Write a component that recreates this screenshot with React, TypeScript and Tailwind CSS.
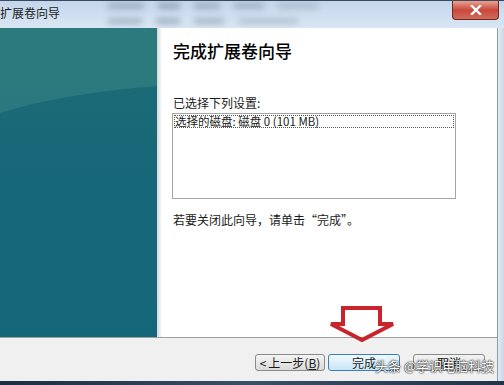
const FONT = "font-['Noto_Sans_CJK_SC','Liberation_Sans',sans-serif]";

function TitleBar() {
  return (
    <div className="relative flex h-[28px] items-start overflow-hidden border-t border-[#3a4a5c] bg-gradient-to-b from-[#c3d6ea] via-[#cfdff0] to-[#d9e6f3]">
      <span className="pt-[4px] text-[12px] leading-[16px] text-[#1b1b1b]">扩展卷向导</span>
      <div className="ml-[48px] flex flex-col gap-[9px] pt-[2px] opacity-50 blur-[3px]">
        <div className="flex gap-[14px]">
          <div className="h-[6px] w-[36px] bg-[#6d7f96]" />
          <div className="h-[6px] w-[22px] bg-[#5f7189]" />
          <div className="h-[6px] w-[26px] bg-[#6d7f96]" />
          <div className="h-[6px] w-[30px] bg-[#7a8aa0]" />
          <div className="h-[6px] w-[40px] bg-[#93a3b6]" />
        </div>
        <div className="flex gap-[14px]">
          <div className="h-[6px] w-[34px] bg-[#7a8aa0]" />
          <div className="h-[6px] w-[24px] bg-[#6d7f96]" />
          <div className="h-[6px] w-[30px] bg-[#7a8aa0]" />
          <div className="h-[6px] w-[60px] bg-[#93a3b6]" />
        </div>
      </div>
      <div className="ml-auto mr-[5px] flex h-[19px] w-[47px] items-center justify-center rounded-b-[4px] border border-t-0 border-[#6b2a24] bg-gradient-to-b from-[#e8a093] via-[#c9483b] to-[#d2695a]">
        <svg width="12" height="10" viewBox="0 0 12 10">
          <path d="M2 1 L10 9 M10 1 L2 9" stroke="#ffffff" strokeWidth="2.4" strokeLinecap="square" />
        </svg>
      </div>
    </div>
  );
}

function SidePanel() {
  return (
    <div className="relative w-[157px] bg-gradient-to-b from-[#1d6c74] via-[#17677a] to-[#146779]">
      <svg className="absolute inset-0" width="157" height="309" viewBox="0 0 157 309">
        <path d="M0 85 Q60 66 157 58 L157 0 L0 0 Z" fill="#2f7b80" opacity="0.85" />
      </svg>
    </div>
  );
}

function Content() {
  return (
    <div className="flex flex-1 flex-col bg-white pl-[11px] pt-[13px]">
      <h1 className="text-[17px] leading-[20px] font-medium text-black">完成扩展卷向导</h1>
      <p className="mt-[35px] text-[12px] leading-[14px] text-[#1a1a1a]">已选择下列设置:</p>
      <div className="ml-[-1px] mt-[3px] h-[86px] w-[284px] border border-[#a5a5a5] bg-white p-px">
        <div className="h-[13px] border border-dotted border-[#555] text-[11.5px] leading-[11px] text-[#1a1a1a]">
          选择的磁盘: 磁盘 0 (101 MB)
        </div>
      </div>
      <p className="mt-[14px] text-[12px] leading-[14px] text-[#1a1a1a]">若要关闭此向导，请单击“完成”。</p>
    </div>
  );
}

function Button({ children, primary, w }: { children: React.ReactNode; primary?: boolean; w: string }) {
  return (
    <div
      className={`flex h-[17px] items-center justify-center rounded-[3px] border text-[12px] leading-[14px] text-[#1a1a1a] ${w} ${
        primary
          ? "border-[#3c7fb1] bg-gradient-to-b from-[#f2f9fd] to-[#c7e6f7]"
          : "border-[#8a8a8a] bg-gradient-to-b from-[#f4f4f4] to-[#dadada]"
      }`}
    >
      {children}
    </div>
  );
}

function Footer() {
  return (
    <div className="flex h-[43px] items-start justify-end bg-[#f0f0f0] pr-[12px] pt-[16px]">
      <Button w="w-[70px]">
        <span className="pr-[2px]">&lt;</span>上一步(<u>B</u>)
      </Button>
      <div className="w-[3px]" />
      <Button w="w-[72px]" primary>
        完成
      </Button>
      <div className="w-[13px]" />
      <Button w="w-[72px]">取消</Button>
    </div>
  );
}

export default function App() {
  return (
    <div className={`relative flex h-[385px] w-[504px] flex-col overflow-hidden bg-[#f0f0f0] ${FONT}`}>
      <TitleBar />
      <div className="flex h-[353px]">
        <div className="flex w-[497px] flex-col">
          <div className="flex h-[309px]">
            <SidePanel />
            <div className="w-[5px] bg-gradient-to-r from-[#d3d7db] to-white" />
            <Content />
          </div>
          <div className="h-px bg-[#a0a0a0]" />
          <Footer />
        </div>
        <div className="w-[7px] border-l border-[#8c9cae] bg-gradient-to-r from-[#e3ebf3] to-[#c9d7e5]" />
      </div>
      <div className="h-[4px] bg-gradient-to-r from-[#1e2d40] via-[#3b4f66] to-[#22334a]" />

      <svg className="absolute left-[326px] top-[304px]" width="72" height="40" viewBox="0 0 72 40">
        <polygon
          points="17,4 54,4 54,20 67,20 36,36 5,20 17,20"
          fill="none"
          stroke="#c9232c"
          strokeWidth="4"
          strokeLinejoin="miter"
        />
      </svg>

      <div className="absolute left-[375px] top-[358px] text-[13px] leading-[16px] text-white [text-shadow:0_0_2px_#000,0_0_1px_#000]">
        头条 @学识电脑科技
      </div>
    </div>
  );
}
